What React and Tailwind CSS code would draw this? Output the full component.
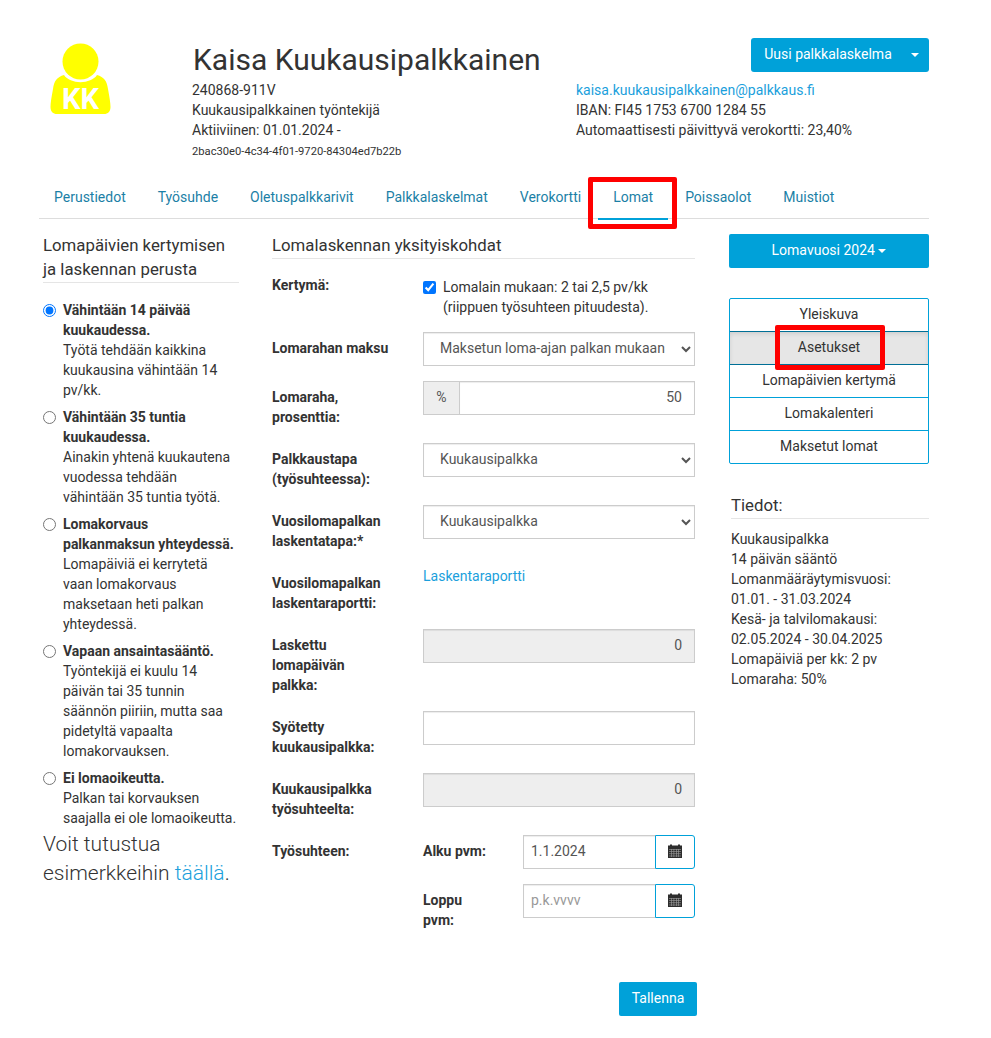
import React from "react";

const Red = ({ className }) => (
  <span className={"absolute border-[#ff0000] rounded-[2px] pointer-events-none " + className} />
);

const Cal = () => (
  <svg width="14" height="14" viewBox="0 0 14 14" aria-hidden="true">
    <path fill="#2d2d2d" d="M0 1.500h2V0.500h2V1.500h6V0.500h2V1.500h2v12.500H0z" />
    <g fill="#fff" opacity="0.55">
      <rect x="1" y="5" width="12" height="0.6" />
      <rect x="1" y="7.300" width="12" height="0.6" />
      <rect x="1" y="9.500" width="12" height="0.6" />
      <rect x="1" y="11.700" width="12" height="0.6" />
      <rect x="3.200" y="5" width="0.6" height="8" />
      <rect x="5.600" y="5" width="0.6" height="8" />
      <rect x="8" y="5" width="0.6" height="8" />
      <rect x="10.400" y="5" width="0.6" height="8" />
    </g>
  </svg>
);

const Caret = ({ className = "" }) => (
  <span className={"inline-block w-0 h-0 border-x-[4px] border-x-transparent border-t-[4px] border-t-white align-middle " + className} />
);

const Avatar = () => (
  <svg width="62" height="72" viewBox="0 0 62 72" aria-hidden="true">
    <circle cx="30.500" cy="18.500" r="18" fill="#ffff00" />
    <path fill="#ffff00" d="M14 32 C20 41.500 41 41.500 47 32 C54 34 57 38 58 46 C59.500 54 60.500 60 60.500 64 C60.500 68.500 58 71 54 71 H7 C3 71 0.500 68.500 0.500 64 C0.500 60 1.500 54 3 46 C4 38 7 34 14 32 Z" />
    <text x="30.500" y="66" textAnchor="middle" fill="#fff" fontFamily="Roboto, sans-serif" fontWeight="700" fontSize="29">KK</text>
  </svg>
);

const tabs = [
  ["Perustiedot"],
  ["Työsuhde"],
  ["Oletuspalkkarivit"],
  ["Palkkalaskelmat"],
  ["Verokortti"],
  ["Lomat", true],
  ["Poissaolot"],
  ["Muistiot"],
];

const radios = [
  ["Vähintään 14 päivää kuukaudessa.", "Työtä tehdään kaikkina kuukausina vähintään 14 pv/kk.", true],
  ["Vähintään 35 tuntia kuukaudessa.", "Ainakin yhtenä kuukautena vuodessa tehdään vähintään 35 tuntia työtä."],
  ["Lomakorvaus palkanmaksun yhteydessä.", "Lomapäiviä ei kerrytetä vaan lomakorvaus maksetaan heti palkan yhteydessä."],
  ["Vapaan ansaintasääntö.", "Työntekijä ei kuulu 14 päivän tai 35 tunnin säännön piiriin, mutta saa pidetyltä vapaalta lomakorvauksen."],
  ["Ei lomaoikeutta.", "Palkan tai korvauksen saajalla ei ole lomaoikeutta."],
];

const Row = ({ label, children }) => (
  <div className="flex mb-[15px]">
    <label className="w-[151px] shrink-0 pt-[6px] pb-[1px] pr-[28px] font-bold">{label}</label>
    <div className="w-[272px]">{children}</div>
  </div>
);

const inputCls =
  "block w-full min-w-0 h-[34px] border border-[#ccc] px-[12px] pb-[2px] text-[#555] shadow-[inset_0_1px_1px_rgba(0,0,0,0.075)] outline-none";

const Select = ({ children }) => (
  <select className="block w-full h-[34px] border border-[#ccc] bg-white px-[12px] pb-[2px] text-[#555] rounded-none shadow-[inset_0_1px_1px_rgba(0,0,0,0.075)]">
    <option>{children}</option>
  </select>
);

const DateField = ({ label, value, placeholder }) => (
  <div className="flex mb-[15px]">
    <label className="w-[100px] shrink-0 pt-[6px] pb-[1px] pr-[30px] font-bold">{label}</label>
    <div className="flex w-[172px] h-[34px]">
      <input
        readOnly
        defaultValue={value}
        placeholder={placeholder}
        className="w-[132px] h-[34px] border border-r-0 border-[#ccc] px-[7px] pb-[2px] text-[#555] placeholder:text-[#999] shadow-[inset_0_1px_1px_rgba(0,0,0,0.075)] outline-none"
      />
      <button className="w-[40px] h-[34px] border border-[#00a1d9] rounded-r-[3px] flex items-center justify-center bg-white pb-[3px]">
        <Cal />
      </button>
    </div>
  </div>
);

export default function App() {
  return (
    <div className="w-[991px] h-[1038px] bg-white text-[14px] leading-[20px] text-[#333] font-['Roboto',sans-serif] overflow-hidden">
      <div className="ml-[39px] w-[890px] pt-[38px]">
        {/* Header */}
        <header className="flex h-[123px]">
          <div className="w-[153px] shrink-0 pl-[11px] pt-[5px]">
            <Avatar />
          </div>
          <div className="w-[384px] shrink-0 pt-[5px]">
            <h1 className="text-[30px] leading-[33px] mb-[4px] ml-[1px] font-normal">Kaisa Kuukausipalkkainen</h1>
            <div>240868-911V</div>
            <div>Kuukausipalkkainen työntekijä</div>
            <div>Aktiiviinen: 01.01.2024 -</div>
            <div className="text-[11.2px] leading-[24px]">2bac30e0-4c34-4f01-9720-84304ed7b22b</div>
          </div>
          <div className="flex-1 relative">
            <div className="flex justify-end h-[34px] mb-[8px]">
              <div className="flex w-[178px] h-[34px] bg-[#00a1d9] rounded-[3px] text-white">
                <button className="w-[149px] h-full font-normal text-center pl-[5px] pb-[2px]">Uusi palkkalaskelma</button>
                <button className="flex-1 h-full flex items-center justify-center pl-[1px]"><Caret /></button>
              </div>
            </div>
            <a className="block text-[#1b9fdc]">kaisa.kuukausipalkkainen@palkkaus.fi</a>
            <div>IBAN: FI45 1753 6700 1284 55</div>
            <div>Automaattisesti päivittyvä verokortti: 23,40%</div>
          </div>
        </header>

        {/* Tabs */}
        <nav className="flex h-[58px] pt-[15px] border-b border-[#ddd]">
          {tabs.map(([t, active]) => (
            <a
              key={t}
              className={
                "relative block h-[44px] px-[15px] mr-[2px] pt-[11px] text-[#1b7fa6] " +
                (active ? "border-b-[2px] border-[#00a1d9]" : "")
              }
            >
              {t}
              {active && <Red className="border-[5px] left-[-10px] right-[-9px] top-[1px] bottom-[-11px]" />}
            </a>
          ))}
        </nav>

        {/* Main */}
        <main className="flex pt-[14px]">
          {/* Left column */}
          <section className="w-[200px] shrink-0 pl-[4px]">
            <h3 className="text-[16.8px] leading-[24px] font-normal pb-[1px] mb-[17px] border-b border-[#e5e5e5]">
              Lomapäivien kertymisen ja laskennan perusta
            </h3>
            {radios.map(([title, body, checked]) => (
              <label key={title} className="flex mb-[7px]">
                <input type="radio" name="basis" defaultChecked={checked} className="w-[13px] h-[13px] mt-[4px] shrink-0" />
                <span className="ml-[7px] block">
                  <b className="block font-bold">{title}</b>
                  {body}
                </span>
              </label>
            ))}
            <p className="text-[21px] leading-[29px] font-light text-[#333] -mt-[5px]">
              Voit tutustua esimerkkeihin <a className="text-[#1b9fdc]">täällä</a>.
            </p>
          </section>

          {/* Middle column */}
          <section className="w-[423px] shrink-0 ml-[33px]">
            <h3 className="text-[16.8px] leading-[24px] font-normal pb-[1px] mb-[9px] border-b border-[#e5e5e5]">
              Lomalaskennan yksityiskohdat
            </h3>
            <div className="flex mb-[15px]">
              <label className="w-[151px] shrink-0 pt-[7px] font-bold">Kertymä:</label>
              <label className="flex pt-[9px] w-[272px]">
                <input type="checkbox" defaultChecked className="w-[13px] h-[13px] mt-[4px] shrink-0" />
                <span className="ml-[7px]">Lomalain mukaan: 2 tai 2,5 pv/kk (riippuen työsuhteen pituudesta).</span>
              </label>
            </div>
            <Row label="Lomarahan maksu"><Select>Maksetun loma-ajan palkan mukaan</Select></Row>
            <Row label="Lomaraha, prosenttia:">
              <div className="flex">
                <span className="w-[36px] shrink-0 h-[34px] pb-[2px] bg-[#eee] border border-r-0 border-[#ccc] flex items-center justify-center text-[#555]">%</span>
                <input readOnly defaultValue="50" className={inputCls + " text-right flex-1"} />
              </div>
            </Row>
            <Row label="Palkkaustapa (työsuhteessa):"><Select>Kuukausipalkka</Select></Row>
            <Row label="Vuosilomapalkan laskentatapa:*"><Select>Kuukausipalkka</Select></Row>
            <Row label="Vuosilomapalkan laskentaraportti:"><a className="block -mt-[1px] text-[#1b9fdc]">Laskentaraportti</a></Row>
            <Row label={<>Laskettu<br />lomapäivän<br />palkka:</>}>
              <input readOnly defaultValue="0" className={inputCls + " text-right bg-[#eee]"} />
            </Row>
            <Row label="Syötetty kuukausipalkka:">
              <input readOnly className={inputCls} />
            </Row>
            <Row label="Kuukausipalkka työsuhteelta:">
              <input readOnly defaultValue="0" className={inputCls + " text-right bg-[#eee]"} />
            </Row>
            <div className="flex">
              <label className="w-[151px] shrink-0 pt-[6px] font-bold">Työsuhteen:</label>
              <div className="w-[272px]">
                <DateField label="Alku pvm:" value="1.1.2024" />
                <DateField label="Loppu pvm:" placeholder="p.k.vvvv" />
              </div>
            </div>
            <div className="flex justify-end mt-[36px] -mr-[2px]">
              <button className="w-[78px] h-[34px] pb-[2px] bg-[#00a1d9] rounded-[2px] text-white font-normal">Tallenna</button>
            </div>
          </section>

          {/* Right column */}
          <aside className="w-[200px] ml-[34px] shrink-0">
            <button className="block w-full h-[34px] mt-[1px] pb-[2px] bg-[#00a1d9] rounded-[2px] text-white font-normal text-center">
              Lomavuosi 2024 <Caret />
            </button>
            <ul className="mt-[30px] border border-[#00a1d9] rounded-[2px] text-center">
              <li className="h-[33px] leading-[31px] border-b border-[#00a1d9]">Yleiskuva</li>
              <li className="relative h-[34px] leading-[31px] -mt-px border-y border-[#006f96] bg-[#e6e6e6] shadow-[inset_0_2px_4px_rgba(0,0,0,0.1)]">
                Asetukset
                <Red className="border-[5px] left-[45px] right-[43px] top-[-7px] bottom-[-6px]" />
              </li>
              <li className="h-[33px] leading-[31px] border-b border-[#00a1d9]">Lomapäivien kertymä</li>
              <li className="h-[33px] leading-[31px] border-b border-[#00a1d9]">Lomakalenteri</li>
              <li className="h-[32px] leading-[31px]">Maksetut lomat</li>
            </ul>
            <h3 className="mt-[29px] text-[16.8px] leading-[24px] font-normal ml-[2px] mb-[10px] pb-[1px] border-b border-[#e5e5e5]">Tiedot:</h3>
            <div className="pl-[2px]">
              <div>Kuukausipalkka</div>
              <div>14 päivän sääntö</div>
              <div>Lomanmääräytymisvuosi:</div>
              <div>01.01. - 31.03.2024</div>
              <div>Kesä- ja talvilomakausi:</div>
              <div>02.05.2024 - 30.04.2025</div>
              <div>Lomapäiviä per kk: 2 pv</div>
              <div>Lomaraha: 50%</div>
            </div>
          </aside>
        </main>
      </div>
    </div>
  );
}
